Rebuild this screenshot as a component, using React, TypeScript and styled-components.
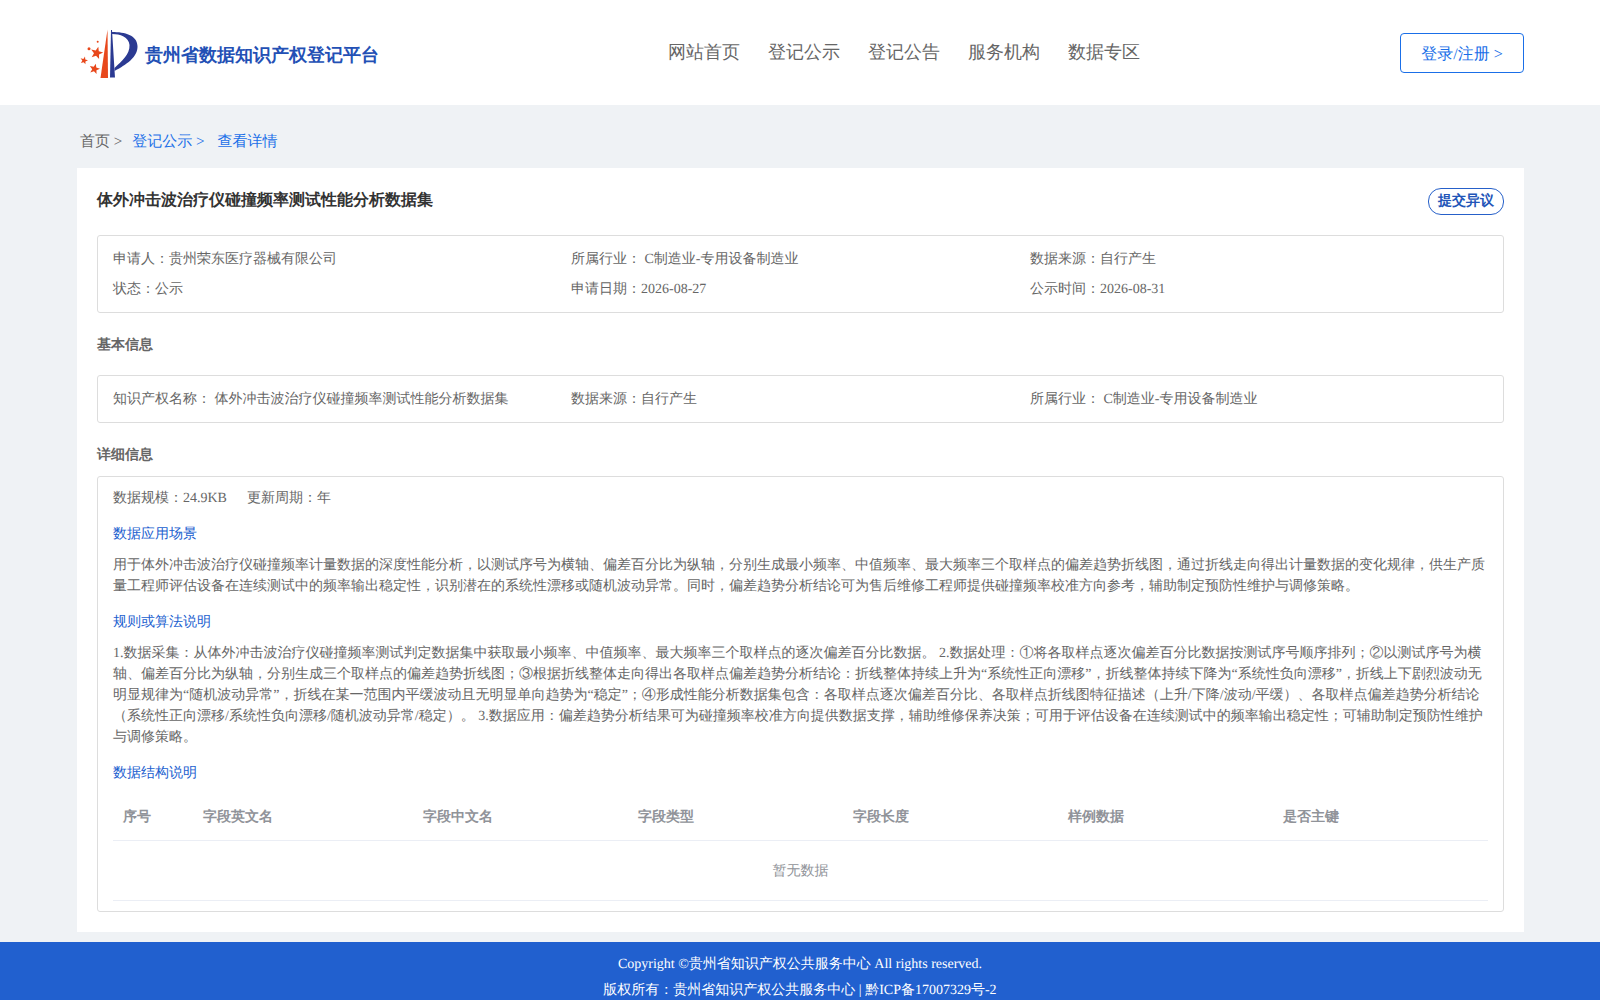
import React from "react";
import styled, { createGlobalStyle } from "styled-components";

const Global = createGlobalStyle`
  html, body { margin: 0; padding: 0; background: #eff2f5; }
  body { font-family: "Liberation Serif", serif; font-size: 14px; color: #666; text-rendering: geometricPrecision; }
`;
const Page = styled.div`display: flex; flex-direction: column; min-height: 1000px;`;
const Header = styled.header`display: flex; align-items: center; height: 105px; background: #fff; padding: 0 76px 0 80px; box-sizing: border-box;`;
const Brand = styled.div`display: flex; align-items: center; width: 297px; margin-left: -2px;`;
const Logo = styled.svg`width: 62px; height: 54px; flex: none; margin-top: 2px;`;
const BrandName = styled.div`font-size: 18px; font-weight: 700; color: #2350b5; margin-left: 5px; margin-top: 7px; white-space: nowrap;`;
const Nav = styled.nav`display: flex; gap: 28px; margin-left: 293px; margin-top: -2px;`;
const NavItem = styled.a`font-size: 18px; color: #666; line-height: 26px;`;
const LoginButton = styled.button`margin-left: auto; width: 124px; height: 40px; font: inherit; font-size: 16px; color: #1a6fe8; background: #fff; border: 1px solid #1a6fe8; border-radius: 4px; padding: 2px 0 0; margin-top: 1px; text-rendering: inherit;`;
const Container = styled.main`width: 1447px; margin: 0 0 0 77px;`;
const Breadcrumb = styled.div`display: flex; align-items: center; height: 63px; font-size: 15px; padding: 12px 0 0 3px; box-sizing: border-box;`;
const Crumb = styled.span<{ $active?: boolean; $gap?: number }>`color: ${p => (p.$active ? "#1a6fe8" : "#666")}; margin-right: ${p => p.$gap ?? 0}px;`;
const Card = styled.section`background: #fff; padding: 20px; height: 764px; box-sizing: border-box;`;
const TitleRow = styled.div`display: flex; justify-content: space-between; align-items: flex-start; height: 47px;`;
const Title = styled.h1`margin: 0; font-size: 16px; font-weight: 700; color: #333; line-height: 26px;`;
const Dissent = styled.button`height: 27px; width: 76px; padding: 1px 0 0; font: inherit; font-size: 14px; font-weight: 700; color: #2255b8; background: #fff; border: 1px solid #2660c9; border-radius: 13px; text-rendering: inherit;`;
const Box = styled.div`border: 1px solid #ddd; border-radius: 3px; padding: 9px 15px 7px;`;
const InfoRow = styled.div`display: grid; grid-template-columns: 458px 459px 1fr; line-height: 30px;`;
const Heading = styled.h2<{ $top: number; $bottom: number }>`margin: ${p => p.$top}px 0 ${p => p.$bottom}px; font-size: 14px; font-weight: 700; color: #666; line-height: 22px;`;
const DetailBox = styled.div`border: 1px solid #ddd; border-radius: 3px; padding: 7px 15px 10px;`;
const Meta = styled.div`display: flex; gap: 20px; line-height: 30px; margin-bottom: 10px;`;
const SubHeading = styled.div<{ $bottom: number }>`color: #2160cf; line-height: 21px; margin-bottom: ${p => p.$bottom}px;`;
const Paragraph = styled.p<{ $bottom: number }>`margin: 0 0 ${p => p.$bottom}px; line-height: 21px;`;
const TableRow = styled.div`display: grid; grid-template-columns: 80px 220px repeat(5, 215px); height: 48px; align-items: center; border-bottom: 1px solid #ebeef5; box-sizing: border-box; padding-top: 2px;`;
const HeadCell = styled.div`padding-left: 10px; font-weight: 700; color: #909399;`;
const Empty = styled.div`height: 60px; line-height: 61px; text-align: center; color: #909399; border-bottom: 1px solid #ebeef5; box-sizing: border-box;`;
const Footer = styled.footer`margin-top: 10px; background: #2160cf; color: #fff; text-align: center; line-height: 26px; padding: 10px 0;`;

const Star = ({ x, y, r }: { x: number; y: number; r: number }) => {
  const pts = Array.from({ length: 10 }, (_, i) => {
    const a = -Math.PI / 2 + 0.25 + (i * Math.PI) / 5;
    const d = i % 2 ? r * 0.42 : r;
    return `${(x + d * Math.cos(a)).toFixed(2)},${(y + d * Math.sin(a)).toFixed(2)}`;
  }).join(" ");
  return <polygon points={pts} fill="#e8481c" />;
};

const columns = ["序号", "字段英文名", "字段中文名", "字段类型", "字段长度", "样例数据", "是否主键"];

export default function App() {
  return (
    <Page>
      <Global />
      <Header>
        <Brand>
          <Logo viewBox="78 26 62 54">
            <path d="M107.5 28.5 L108 77 L100.5 77 Z" fill="#e8481c" />
            <path d="M111 29 L112 29 L115 76.5 L110 76.5 Z" fill="#2b3a92" />
            <path d="M112 31 C125 31 137 34 137.5 45 C138 56 126 64 114.5 70 L114.5 67 C122 60 130 53 129.5 44 C129 36 120 33 112 33 Z" fill="#2b3a92" />
            <Star x={96.7} y={52} r={6.5} />
            <Star x={84} y={59.5} r={4} />
            <Star x={94.5} y={68} r={5.5} />
            <circle cx={89} cy={47.7} r={1.5} fill="#e8481c" />
            <circle cx={97.7} cy={40.7} r={1} fill="#e8481c" />
          </Logo>
          <BrandName>贵州省数据知识产权登记平台</BrandName>
        </Brand>
        <Nav>
          {["网站首页", "登记公示", "登记公告", "服务机构", "数据专区"].map(n => (
            <NavItem key={n}>{n}</NavItem>
          ))}
        </Nav>
        <LoginButton>登录/注册 &gt;</LoginButton>
      </Header>
      <Container>
        <Breadcrumb>
          <Crumb $gap={10}>首页 &gt;</Crumb>
          <Crumb $active $gap={13}>登记公示 &gt;</Crumb>
          <Crumb $active>查看详情</Crumb>
        </Breadcrumb>
        <Card>
          <TitleRow>
            <Title>体外冲击波治疗仪碰撞频率测试性能分析数据集</Title>
            <Dissent>提交异议</Dissent>
          </TitleRow>
          <Box>
            <InfoRow>
              <span>申请人：贵州荣东医疗器械有限公司</span>
              <span>所属行业： C制造业-专用设备制造业</span>
              <span>数据来源：自行产生</span>
            </InfoRow>
            <InfoRow>
              <span>状态：公示</span>
              <span>申请日期：2026-08-27</span>
              <span>公示时间：2026-08-31</span>
            </InfoRow>
          </Box>
          <Heading $top={22} $bottom={18}>基本信息</Heading>
          <Box>
            <InfoRow>
              <span>知识产权名称： 体外冲击波治疗仪碰撞频率测试性能分析数据集</span>
              <span>数据来源：自行产生</span>
              <span>所属行业： C制造业-专用设备制造业</span>
            </InfoRow>
          </Box>
          <Heading $top={22} $bottom={9}>详细信息</Heading>
          <DetailBox>
            <Meta>
              <span>数据规模：24.9KB</span>
              <span>更新周期：年</span>
            </Meta>
            <SubHeading $bottom={10}>数据应用场景</SubHeading>
            <Paragraph $bottom={14.5}>用于体外冲击波治疗仪碰撞频率计量数据的深度性能分析，以测试序号为横轴、偏差百分比为纵轴，分别生成最小频率、中值频率、最大频率三个取样点的偏差趋势折线图，通过折线走向得出计量数据的变化规律，供生产质量工程师评估设备在连续测试中的频率输出稳定性，识别潜在的系统性漂移或随机波动异常。同时，偏差趋势分析结论可为售后维修工程师提供碰撞频率校准方向参考，辅助制定预防性维护与调修策略。</Paragraph>
            <SubHeading $bottom={10}>规则或算法说明</SubHeading>
            <Paragraph $bottom={15.5}>1.数据采集：从体外冲击波治疗仪碰撞频率测试判定数据集中获取最小频率、中值频率、最大频率三个取样点的逐次偏差百分比数据。 2.数据处理：①将各取样点逐次偏差百分比数据按测试序号顺序排列；②以测试序号为横轴、偏差百分比为纵轴，分别生成三个取样点的偏差趋势折线图；③根据折线整体走向得出各取样点偏差趋势分析结论：折线整体持续上升为“系统性正向漂移”，折线整体持续下降为“系统性负向漂移”，折线上下剧烈波动无明显规律为“随机波动异常”，折线在某一范围内平缓波动且无明显单向趋势为“稳定”；④形成性能分析数据集包含：各取样点逐次偏差百分比、各取样点折线图特征描述（上升/下降/波动/平缓）、各取样点偏差趋势分析结论（系统性正向漂移/系统性负向漂移/随机波动异常/稳定）。 3.数据应用：偏差趋势分析结果可为碰撞频率校准方向提供数据支撑，辅助维修保养决策；可用于评估设备在连续测试中的频率输出稳定性；可辅助制定预防性维护与调修策略。</Paragraph>
            <SubHeading $bottom={9}>数据结构说明</SubHeading>
            <TableRow>
              {columns.map(c => <HeadCell key={c}>{c}</HeadCell>)}
            </TableRow>
            <Empty>暂无数据</Empty>
          </DetailBox>
        </Card>
      </Container>
      <Footer>
        <div>Copyright ©贵州省知识产权公共服务中心 All rights reserved.</div>
        <div>版权所有：贵州省知识产权公共服务中心 | 黔ICP备17007329号-2</div>
      </Footer>
    </Page>
  );
}
